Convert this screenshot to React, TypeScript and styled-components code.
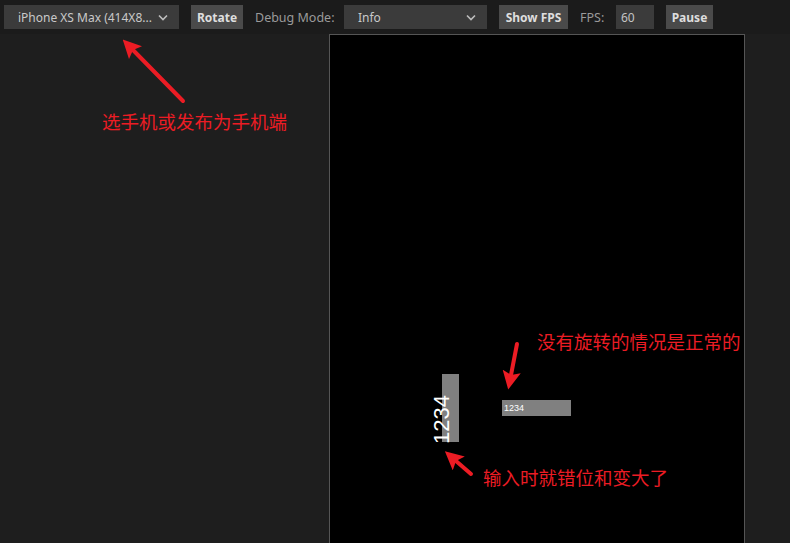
import React from 'react';
import styled, { createGlobalStyle } from 'styled-components';

const GlobalStyle = createGlobalStyle`
  html, body {
    margin: 0;
    padding: 0;
    background: #1e1e1e;
    overflow: hidden;
    font-family: 'Noto Sans', 'Liberation Sans', sans-serif;
  }
`;

const ArrowOverlay = () => (
  <Overlay width="790" height="543" viewBox="0 0 790 543">
    <defs>
      <marker
        id="head"
        viewBox="0 0 10 10"
        refX="2"
        refY="5"
        markerWidth="4.6"
        markerHeight="4.6"
        orient="auto"
      >
        <path d="M0 0 L10 5 L0 10 L2 5 z" fill="#ec1c24" />
      </marker>
    </defs>
    <line x1="183" y1="101" x2="133" y2="50" stroke="#ec1c24" strokeWidth="4" strokeLinecap="round" markerEnd="url(#head)" />
    <line x1="517" y1="344" x2="511" y2="375" stroke="#ec1c24" strokeWidth="4" strokeLinecap="round" markerEnd="url(#head)" />
    <line x1="471" y1="474" x2="456" y2="461" stroke="#ec1c24" strokeWidth="4" strokeLinecap="round" markerEnd="url(#head)" />
  </Overlay>
);

const App = () => {
  return (
    <Page>
      <GlobalStyle />
      <Toolbar>
        <Select width={175}>
          <span>iPhone XS Max (414X8...</span>
          <Chevron />
        </Select>
        <Button width={52}>Rotate</Button>
        <Label width={77}>Debug Mode:</Label>
        <Select width={143}>
          <span>Info</span>
          <Chevron />
        </Select>
        <Button width={69}>Show FPS</Button>
        <Label width={24}>FPS:</Label>
        <FpsInput>60</FpsInput>
        <Button width={47}>Pause</Button>
      </Toolbar>
      <Workspace>
        <Canvas>
          <VerticalBar />
          <RotatedText>1234</RotatedText>
          <HorizontalBar>1234</HorizontalBar>
        </Canvas>
      </Workspace>
      <ArrowOverlay />
      <Note top={108} left={102}>选手机或发布为手机端</Note>
      <Note top={328} left={537}>没有旋转的情况是正常的</Note>
      <Note top={464} left={483}>输入时就错位和变大了</Note>
    </Page>
  );
};

const Chevron = () => (
  <svg width="10" height="7" viewBox="0 0 10 7">
    <path d="M1 1.5 L5 5.5 L9 1.5" fill="none" stroke="#bdbdbd" strokeWidth="1.6" />
  </svg>
);

export default App;

const Page = styled.div`
  position: relative;
  width: 790px;
  height: 543px;
  overflow: hidden;
`;
const Toolbar = styled.div`
  display: flex;
  align-items: center;
  gap: 12px;
  height: 34px;
  padding: 0 4px;
  box-sizing: border-box;
  background: #1b1b1b;
`;
const Select = styled.div<{ width: number }>`
  display: flex;
  align-items: center;
  justify-content: space-between;
  width: ${p => p.width}px;
  height: 24px;
  padding: 0 11px 0 14px;
  box-sizing: border-box;
  background: #3b3b3b;
  color: #c9c9c9;
  font-size: 12px;
`;
const Button = styled.div<{ width: number }>`
  display: flex;
  align-items: center;
  justify-content: center;
  width: ${p => p.width}px;
  height: 24px;
  background: #4a4a4a;
  color: #dedede;
  font-size: 12px;
  font-weight: bold;
`;
const Label = styled.div<{ width: number }>`
  width: ${p => p.width}px;
  color: #9a9a9a;
  font-size: 12.5px;
  white-space: nowrap;
`;
const FpsInput = styled.div`
  display: flex;
  align-items: center;
  width: 38px;
  height: 24px;
  padding-left: 5px;
  box-sizing: border-box;
  background: #3b3b3b;
  color: #c4c4c4;
  font-size: 12px;
`;
const Workspace = styled.div`
  display: flex;
  padding-left: 329px;
`;
const Canvas = styled.div`
  position: relative;
  width: 414px;
  height: 620px;
  border: 1px solid #555;
  background: #000;
`;
const VerticalBar = styled.div`
  position: absolute;
  left: 112px;
  top: 339px;
  width: 17px;
  height: 68px;
  background: #808080;
`;
const RotatedText = styled.div`
  position: absolute;
  left: 89px;
  top: 374px;
  width: 46px;
  height: 24px;
  line-height: 24px;
  text-align: center;
  color: #fff;
  font-family: 'Liberation Sans', Arial, sans-serif;
  font-size: 22px;
  transform: rotate(-90deg);
`;
const HorizontalBar = styled.div`
  position: absolute;
  left: 172px;
  top: 365px;
  width: 69px;
  height: 16px;
  padding-left: 2px;
  box-sizing: border-box;
  background: #808080;
  color: #fff;
  font-family: 'Liberation Sans', Arial, sans-serif;
  font-size: 9px;
  line-height: 16px;
`;
const Overlay = styled.svg`
  position: absolute;
  left: 0;
  top: 0;
  pointer-events: none;
`;
const Note = styled.div<{ top: number; left: number }>`
  position: absolute;
  top: ${p => p.top}px;
  left: ${p => p.left}px;
  color: #ec1c24;
  font-family: 'Noto Sans CJK SC', sans-serif;
  font-size: 18.5px;
  line-height: 26px;
  white-space: nowrap;
`;
